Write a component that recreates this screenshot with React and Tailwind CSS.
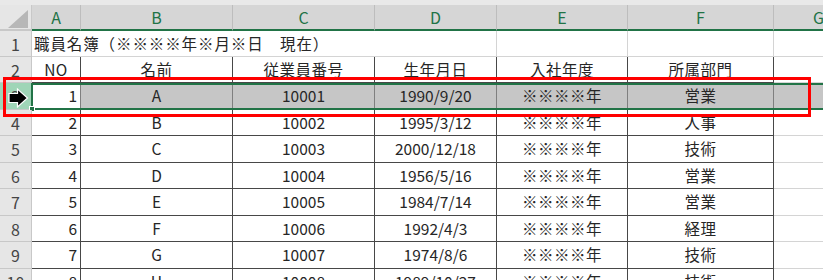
import React from "react";

const font = { fontFamily: '"Noto Sans CJK JP", "Noto Sans", sans-serif' };

const widths = ["w-[49px]", "w-[152px]", "w-[142px]", "w-[122px]", "w-[131px]", "w-[146px]", "w-[90px]"];
const letters = ["A", "B", "C", "D", "E", "F", "G"];

const rows = [
    ["1", "A", "10001", "1990/9/20", "※※※※年", "営業"],
    ["2", "B", "10002", "1995/3/12", "※※※※年", "人事"],
    ["3", "C", "10003", "2000/12/18", "※※※※年", "技術"],
    ["4", "D", "10004", "1956/5/16", "※※※※年", "営業"],
    ["5", "E", "10005", "1984/7/14", "※※※※年", "営業"],
    ["6", "F", "10006", "1992/4/3", "※※※※年", "経理"],
    ["7", "G", "10007", "1974/8/6", "※※※※年", "技術"],
    ["8", "H", "10008", "1989/10/27", "※※※※年", "技術"],
];

// row heights alternate a little so the grid lines land where Excel draws them
const heights = ["h-[27px]", "h-[26px]", "h-[27px]", "h-[26px]", "h-[27px]", "h-[26px]", "h-[27px]", "h-[26px]"];

function RowHead({ n, active }) {
    return (
        <div
            className={
                "w-[32px] shrink-0 flex items-center justify-center border-r border-b border-[#c8c8c8] text-[16px] text-[#444] " +
                (active ? "bg-[#9fd5b7]" : "bg-[#e6e6e6]")
            }
        >
            {n}
        </div>
    );
}

function Arrow() {
    return (
        <svg className="absolute left-[6px] top-[86px]" width="24" height="24" viewBox="0 0 24 24">
            <path
                d="M3 7.5 H11.5 V3 L21.5 12 L11.5 21 V16.5 H3 Z"
                fill="#000"
                stroke="#fff"
                strokeWidth="1.2"
                strokeLinejoin="miter"
            />
        </svg>
    );
}

export default function App() {
    return (
        <div className="relative w-[823px] h-[280px] overflow-hidden bg-white text-[#262626]" style={font}>
            {/* top strip */}
            <div className="h-[5px] bg-[#e9e9e9]" />

            {/* column headers */}
            <div className="flex h-[26px]">
                <div className="relative w-[32px] shrink-0 bg-[#e6e6e6] border-r border-b-2 border-[#c8c8c8]">
                    <svg className="absolute left-[8px] top-[5px]" width="20" height="18" viewBox="0 0 20 18">
                        <polygon points="20,0 20,18 0,18" fill="#b7b7b7" />
                    </svg>
                </div>
                {letters.map((l, i) => (
                    <div
                        key={l}
                        className={
                            widths[i] +
                            " shrink-0 flex items-center justify-center bg-[#d6d6d6] border-r border-r-[#bdbdbd] border-b-2 border-b-[#217346] text-[16px] text-[#217346]"
                        }
                    >
                        {l}
                    </div>
                ))}
            </div>

            {/* row 1: title */}
            <div className="flex h-[26px]">
                <RowHead n="1" />
                <div className="w-[343px] shrink-0 flex items-center pl-[2px] border-b border-[#d4d4d4] text-[15.5px] whitespace-nowrap tracking-[0.9px]">
                    職員名簿（※※※※年※月※日　現在）
                </div>
                {[3, 4, 5, 6].map((i) => (
                    <div key={i} className={widths[i] + " shrink-0 border-r border-b border-[#d4d4d4]"} />
                ))}
            </div>

            {/* row 2: table head */}
            <div className="flex h-[26px]">
                <RowHead n="2" />
                {["NO", "名前", "従業員番号", "生年月日", "入社年度", "所属部門"].map((t, i) => (
                    <div
                        key={t}
                        className={
                            widths[i] +
                            " shrink-0 flex items-center justify-center border-r border-b border-[#474747] text-[15.5px] tracking-[0.5px]"
                        }
                    >
                        {t}
                    </div>
                ))}
                <div className="w-[90px] shrink-0 border-b border-[#d4d4d4]" />
            </div>

            {/* data rows */}
            {rows.map((r, ri) => {
                const active = ri === 0;
                return (
                    <div key={ri} className={"relative flex " + heights[ri]}>
                        <RowHead n={String(ri + 3)} active={active} />
                        {r.map((v, i) => (
                            <div
                                key={i}
                                className={
                                    widths[i] +
                                    " shrink-0 flex items-center border-r border-b text-[15.5px] " +
                                    (i === 0 ? "justify-end pr-[3px] " : "justify-center ") +
                                    (i >= 4 ? "tracking-[0.5px] " : "") +
                                    (active
                                        ? i === 0
                                            ? "bg-white border-[#7f7f7f]"
                                            : "bg-[#c6c6c6] border-[#7f7f7f]"
                                        : "border-[#474747]")
                                }
                            >
                                {v}
                            </div>
                        ))}
                        <div
                            className={
                                "w-[90px] shrink-0 border-b " +
                                (active ? "bg-[#c6c6c6] border-[#c6c6c6]" : "border-[#d4d4d4]")
                            }
                        />
                        {active && (
                            <>
                                <div className="absolute left-[31px] right-0 top-0 h-[27px] border-t-2 border-b-2 border-l-2 border-[#217346]" />
                                <div className="absolute left-[29px] top-[23px] w-[6px] h-[6px] bg-[#217346] border border-white" />
                            </>
                        )}
                    </div>
                );
            })}

            <Arrow />

            {/* red highlight box */}
            <div className="absolute left-[3px] top-[77px] w-[808px] h-[40px] border-[3px] border-[#ff0000]" />
        </div>
    );
}
